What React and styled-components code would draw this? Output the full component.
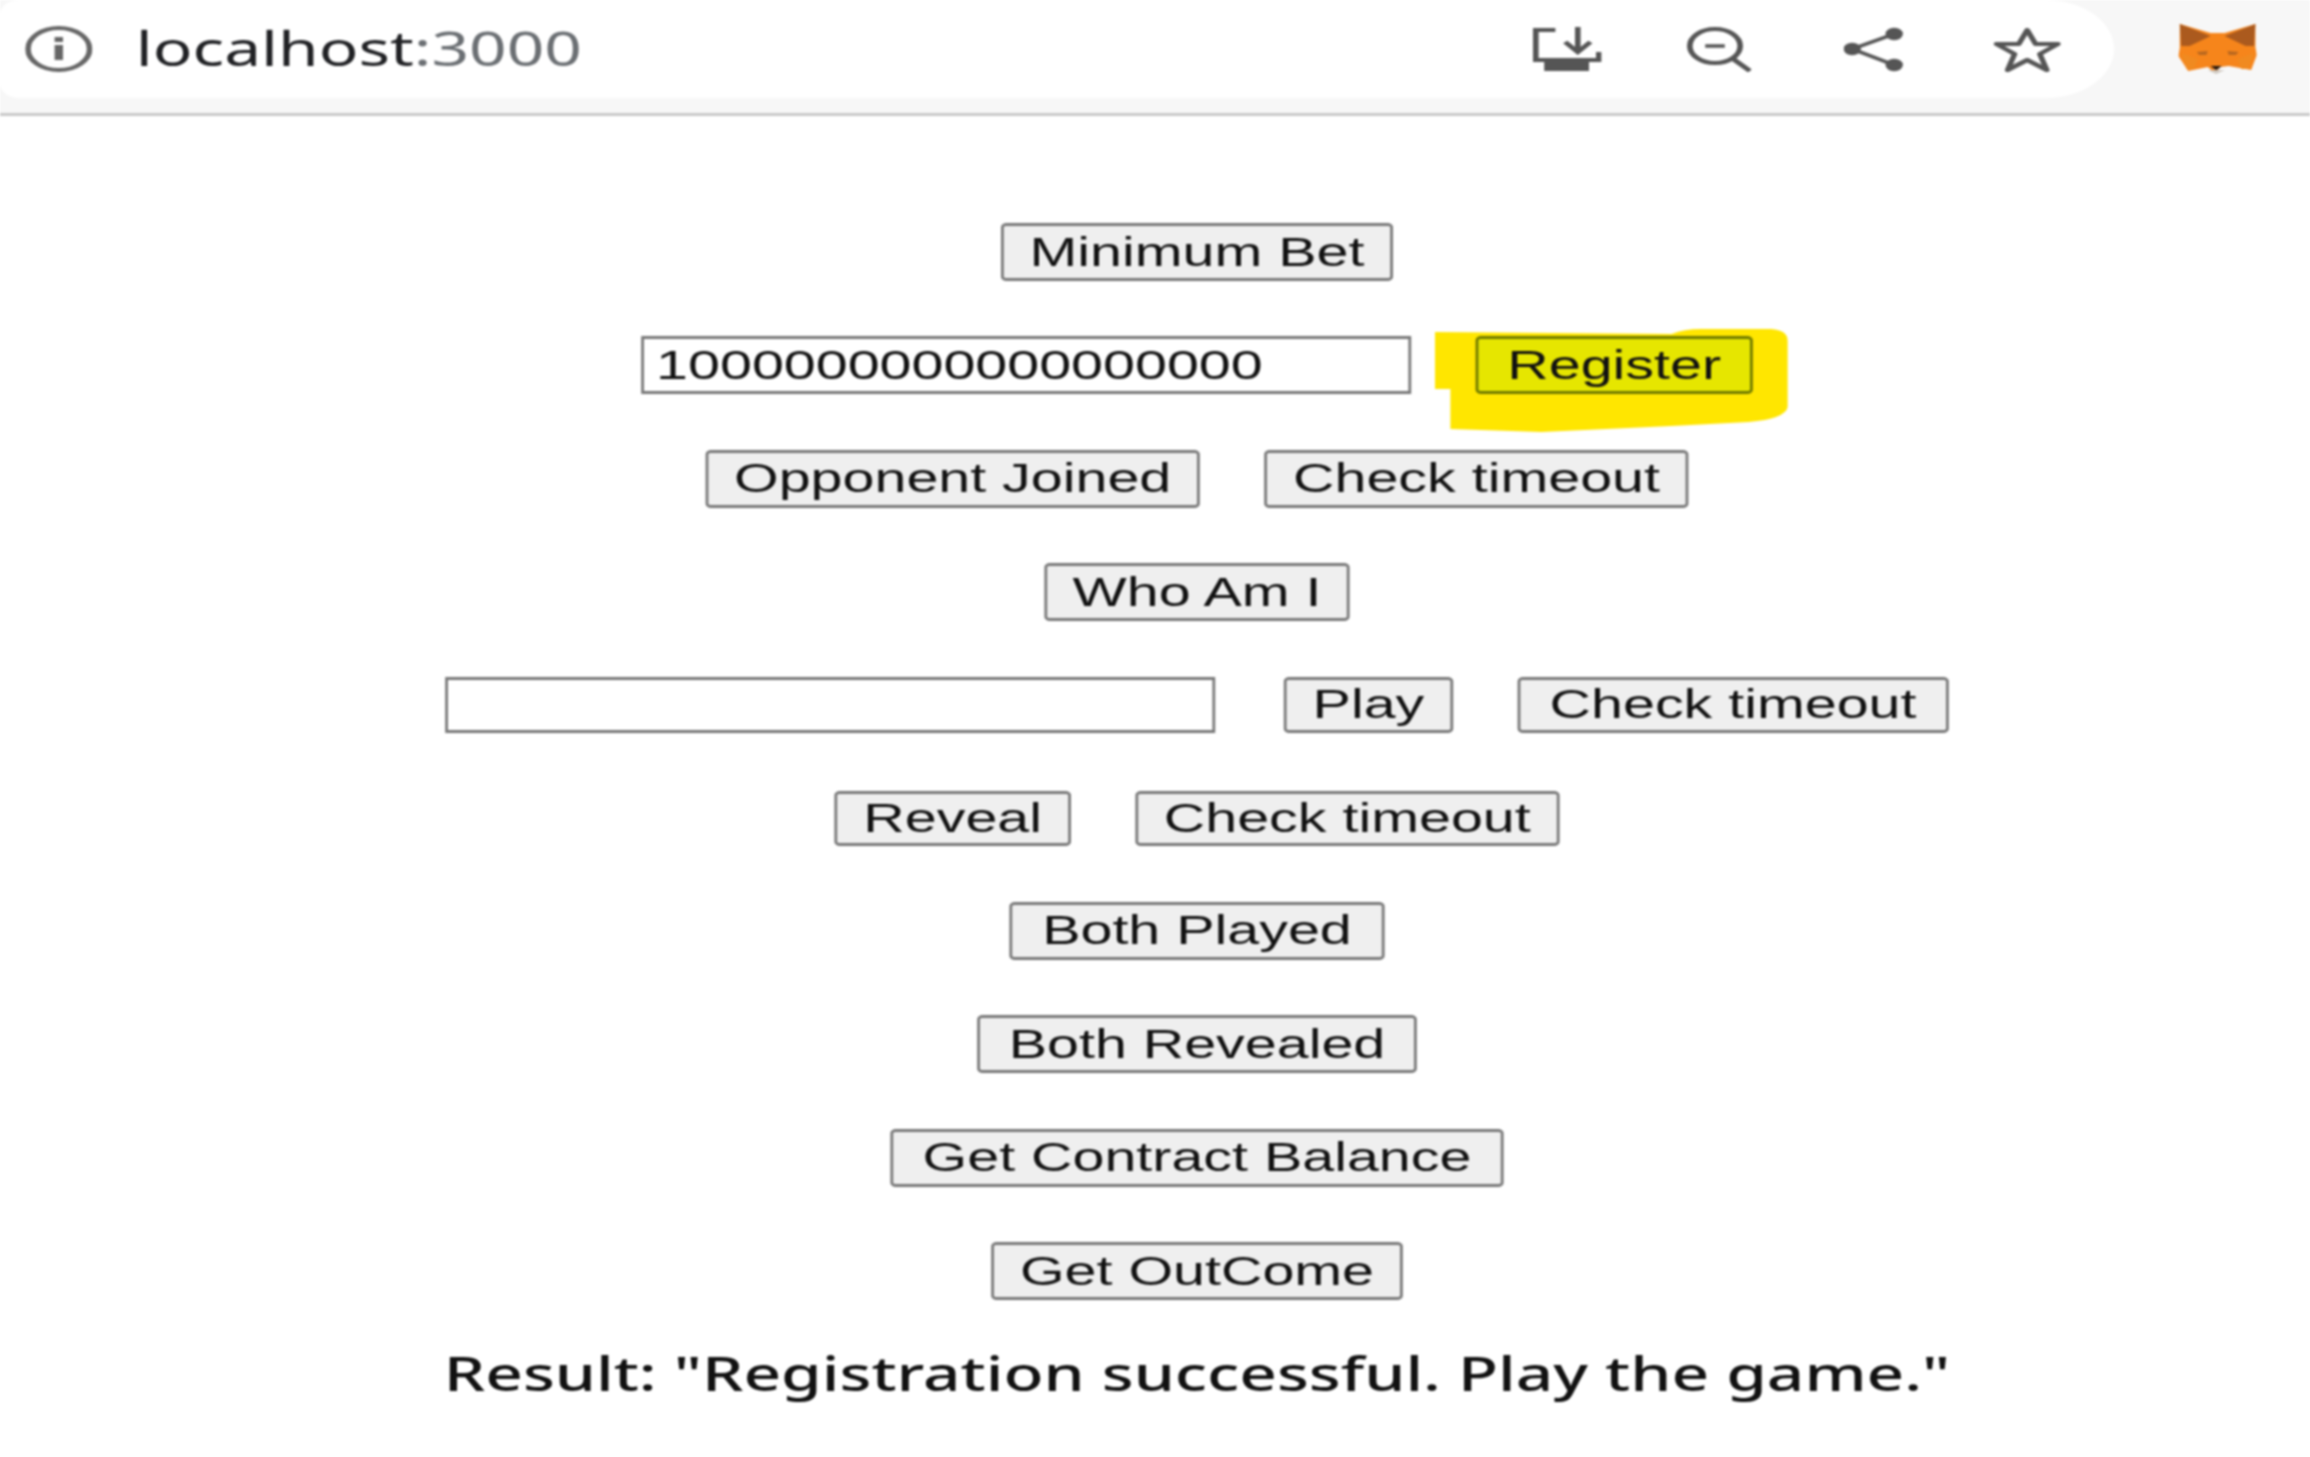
import React from 'react';
import styled, { createGlobalStyle } from 'styled-components';

const GlobalStyle = createGlobalStyle`
  html, body {
    margin: 0;
    width: 2310px;
    height: 1457px;
    overflow: hidden;
    background: #fff;
  }
`;

// the screenshot is stretched sideways, so the whole page is laid out narrow and scaled
const Stage = styled.div`
  width: 1650px;
  height: 1457px;
  transform: scaleX(1.4);
  transform-origin: 0 0;
  filter: blur(0.8px);
  color: #111;
`;

const TopBar = styled.header`
  display: flex;
  align-items: flex-start;
  height: 113px;
  background: #f7f7f7;
  border-bottom: 3px solid #c9c9c9;
`;

const AddressBar = styled.div`
  display: flex;
  align-items: center;
  flex: 0 0 1510px;
  box-sizing: border-box;
  height: 98px;
  padding: 0 38px 0 18px;
  background: #fff;
  border-radius: 14px 49px 49px 14px;
`;

const Url = styled.div`
  margin: -3px 0 0 31px;
  font-family: 'Noto Sans', sans-serif;
  font-size: 47px;
  color: #202124;
`;

const Port = styled.span`
  color: #6b6f73;
`;

const Actions = styled.div`
  display: flex;
  align-items: center;
  margin-left: auto;
`;

const Action = styled.span`
  display: flex;
  margin-left: ${(p) => p.$gap || 0}px;
`;

const Fox = styled.svg`
  flex: none;
  margin: 23px 0 0 46px;
`;

const Main = styled.main`
  display: flex;
  flex-direction: column;
  align-items: center;
  gap: 55.4px;
  padding: 107px 0 0 60px;
`;

const Row = styled.div`
  display: flex;
  justify-content: center;
  align-items: flex-start;
  gap: 46px;
  height: ${(p) => p.$height || 58}px;
`;

const Button = styled.button`
  box-sizing: border-box;
  height: ${(p) => p.$height || 58}px;
  padding: 0 ${(p) => (p.$wide ? 21 : 18.5)}px;
  background: ${(p) => (p.$marked ? '#e6e600' : '#efefef')};
  border-style: solid;
  border-width: 3px 2px;
  border-color: ${(p) => (p.$marked ? '#6f7a00' : '#787878')};
  border-radius: 4px;
  font-family: 'Liberation Sans', Arial, sans-serif;
  font-size: 41px;
  color: #111;
`;

const TextBox = styled.input`
  box-sizing: border-box;
  width: 550px;
  height: ${(p) => p.$height || 58}px;
  margin-right: ${(p) => p.$after || 0}px;
  padding: 0 9px;
  background: #fff;
  border-style: solid;
  border-width: 3px 2px;
  border-color: #787878;
  border-radius: 0;
  outline: none;
  font-family: 'Liberation Sans', Arial, sans-serif;
  font-size: 41px;
  color: #111;
`;

const Marked = styled.div`
  position: relative;
  z-index: 0;
`;

const Scribble = styled.svg`
  position: absolute;
  left: -29px;
  top: -7px;
  z-index: -1;
`;

const Result = styled.div`
  margin-top: -11px;
  font-family: 'Noto Sans', sans-serif;
  font-size: 46.9px;
  font-weight: 500;
  line-height: 58px;
  white-space: nowrap;
`;

const Info = () => (
  <svg width="48" height="46" viewBox="0 0 48 46" fill="none">
    <ellipse cx="24" cy="23" rx="22" ry="21" stroke="#666" strokeWidth="4" />
    <rect x="21" y="19" width="6" height="15" fill="#666" />
    <rect x="21" y="11" width="6" height="5" fill="#666" />
  </svg>
);

const Install = () => (
  <svg width="49" height="45" viewBox="0 0 49 45" fill="none" stroke="#555" strokeWidth="4">
    <path d="M16 3H2V33H47V25" />
    <path d="M32 0V25M23 15L32 25L41 15" />
    <rect x="8" y="35" width="32" height="9" fill="#555" stroke="none" />
  </svg>
);

const ZoomOut = () => (
  <svg width="46" height="45" viewBox="0 0 46 45" fill="none" stroke="#555" strokeWidth="4">
    <ellipse cx="20" cy="19" rx="18" ry="17" />
    <path d="M13 19H27" strokeWidth="3.4" />
    <path d="M32 31L45 44" />
  </svg>
);

const Share = () => (
  <svg width="43" height="45" viewBox="0 0 43 45" fill="#555" stroke="#555" strokeWidth="3.4">
    <path d="M6 22L36 7M6 22L36 38" fill="none" />
    <circle cx="6" cy="22" r="4.5" />
    <circle cx="36" cy="7" r="4.5" />
    <circle cx="36" cy="38" r="4.5" />
  </svg>
);

const Star = () => (
  <svg width="48" height="45" viewBox="0 0 48 45" fill="none" stroke="#555" strokeWidth="4" strokeLinejoin="round">
    <path d="M24 3L30 17H46L33 27L38 43L24 33L10 43L15 27L2 17H18Z" />
  </svg>
);

const FoxIcon = () => (
  <Fox width="56" height="51" viewBox="0 0 56 51">
    <path d="M1 1L23 10H33L55 1L55 24L56 32L52 47L36 43L30 44L26 50L21 44L7 48L0 33L1 25Z" fill="#f6851b" />
    <path d="M1 1L23 13L8 23L2 23Z" fill="#ab5a1e" />
    <path d="M55 1L33 13L48 23L54 23Z" fill="#ab5a1e" />
    <path d="M13 29L21 28L20 32L15 32ZM43 29L35 28L36 32L41 32Z" fill="#b9681f" />
    <path d="M2 30L14 36L11 46L6 46ZM54 30L42 36L45 46L50 46Z" fill="#f08a20" />
    <path d="M23 43H31L27 47Z" fill="#1c1512" />
    <path d="M21 47H33L27 51Z" fill="#cfc8c0" />
  </Fox>
);

const App = () => (
  <Stage>
    <GlobalStyle />
    <TopBar>
      <AddressBar>
        <Info />
        <Url>
          localhost<Port>:3000</Port>
        </Url>
        <Actions>
          <Action>
            <Install />
          </Action>
          <Action $gap={61}>
            <ZoomOut />
          </Action>
          <Action $gap={66}>
            <Share />
          </Action>
          <Action $gap={64}>
            <Star />
          </Action>
        </Actions>
      </AddressBar>
      <FoxIcon />
    </TopBar>
    <Main>
      <Row>
        <Button>Minimum Bet</Button>
      </Row>
      <Row>
        <TextBox readOnly value="1000000000000000000" />
        <Marked>
          <Scribble width="252" height="103" viewBox="0 0 252 103">
            <path
              d="M0 3L169 5Q178 0 190 0H240Q252 1 252 12V78Q250 90 224 93L169 97L76 103L33 101L11 100V60H0Z"
              fill="#ffe600"
            />
          </Scribble>
          <Button $marked $wide>Register</Button>
        </Marked>
      </Row>
      <Row>
        <Button>Opponent Joined</Button>
        <Button>Check timeout</Button>
      </Row>
      <Row>
        <Button>Who Am I</Button>
      </Row>
      <Row $height={59}>
        <TextBox $height={56} $after={3} readOnly value="" />
        <Button $height={56}>Play</Button>
        <Button $height={56} $wide>Check timeout</Button>
      </Row>
      <Row $height={55.5}>
        <Button $height={55}>Reveal</Button>
        <Button $height={55}>Check timeout</Button>
      </Row>
      <Row>
        <Button $wide>Both Played</Button>
      </Row>
      <Row>
        <Button $wide>Both Revealed</Button>
      </Row>
      <Row>
        <Button $wide>Get Contract Balance</Button>
      </Row>
      <Row>
        <Button>Get OutCome</Button>
      </Row>
      <Result>Result: "Registration successful. Play the game."</Result>
    </Main>
  </Stage>
);

export default App;
